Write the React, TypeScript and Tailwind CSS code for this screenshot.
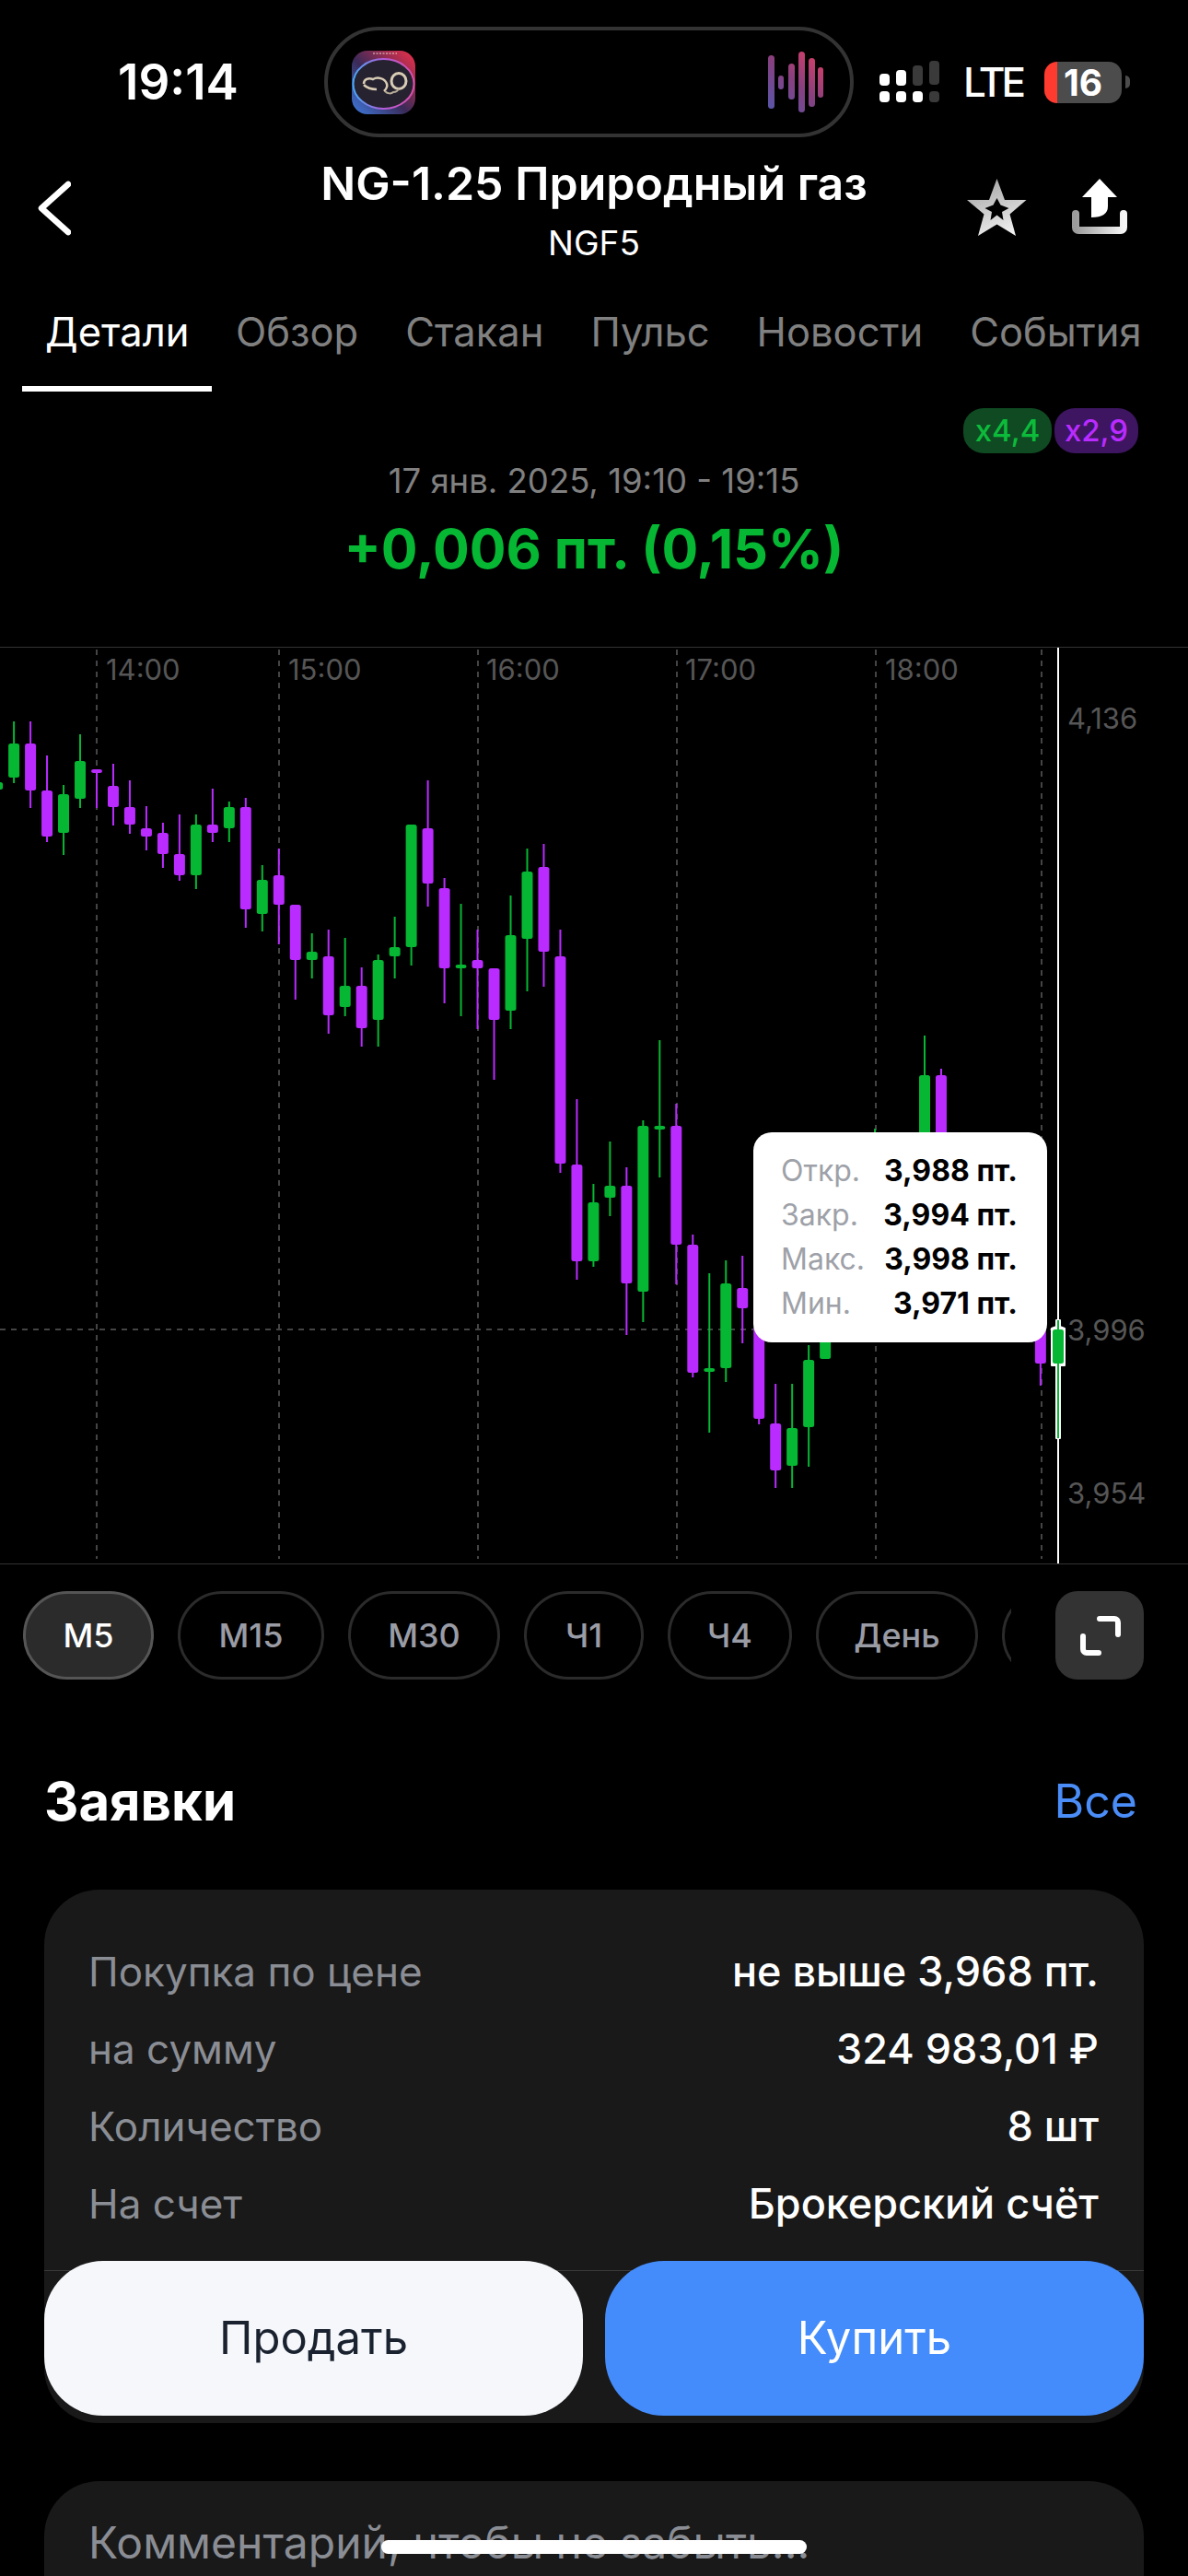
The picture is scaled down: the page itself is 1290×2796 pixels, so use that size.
// x offset of candle 0 and the step between candles
const X0 = 105
const STEP = 17.98
const GREEN = "#06b733"
const PURPLE = "#b92bff"

// [index, up?, wickTop, bodyTop, bodyBottom, wickBottom]
const candles: [number, boolean, number, number, number, number][] = [
  [-6, true, 849, 849, 857, 857],
  [-5, true, 783, 807, 844, 850],
  [-4, false, 783, 807, 858, 877],
  [-3, false, 820, 858, 908, 914],
  [-2, true, 852, 862, 904, 928],
  [-1, true, 797, 826, 867, 877],
  [0, false, 835, 835, 839, 877],
  [1, false, 829, 853, 876, 896],
  [2, false, 847, 876, 895, 905],
  [3, false, 875, 899, 908, 923],
  [4, false, 893, 904, 927, 942],
  [5, false, 884, 927, 950, 956],
  [6, true, 884, 895, 950, 965],
  [7, false, 856, 895, 904, 914],
  [8, true, 870, 876, 899, 914],
  [9, false, 866, 876, 987, 1007],
  [10, true, 939, 955, 992, 1011],
  [11, false, 921, 950, 982, 1025],
  [12, false, 982, 982, 1042, 1085],
  [13, true, 1013, 1033, 1042, 1062],
  [14, false, 1009, 1038, 1102, 1122],
  [15, true, 1018, 1070, 1093, 1103],
  [16, false, 1050, 1070, 1116, 1136],
  [17, true, 1036, 1042, 1107, 1136],
  [18, true, 995, 1028, 1038, 1062],
  [19, true, 895, 895, 1028, 1048],
  [20, false, 847, 899, 959, 984],
  [21, false, 953, 964, 1051, 1089],
  [22, true, 981, 1047, 1051, 1103],
  [23, false, 1009, 1042, 1051, 1117],
  [24, false, 1051, 1051, 1107, 1172],
  [25, true, 972, 1015, 1097, 1117],
  [26, true, 921, 946, 1019, 1076],
  [27, false, 916, 941, 1033, 1071],
  [28, false, 1009, 1038, 1263, 1273],
  [29, false, 1193, 1264, 1369, 1389],
  [30, true, 1285, 1305, 1369, 1375],
  [31, true, 1239, 1287, 1300, 1320],
  [32, false, 1267, 1287, 1393, 1449],
  [33, true, 1216, 1222, 1402, 1435],
  [34, true, 1129, 1222, 1226, 1278],
  [35, false, 1198, 1222, 1351, 1394],
  [36, false, 1340, 1351, 1490, 1495],
  [37, true, 1382, 1485, 1489, 1555],
  [38, true, 1368, 1393, 1485, 1500],
  [39, false, 1363, 1398, 1420, 1458],
  [40, false, 1370, 1440, 1540, 1546],
  [41, false, 1502, 1545, 1596, 1615],
  [42, true, 1502, 1550, 1591, 1615],
  [43, true, 1460, 1476, 1549, 1592],
  [44, true, 1375, 1400, 1475, 1475],
  [47, true, 1225, 1240, 1300, 1330],
  [50, true, 1124, 1167, 1290, 1330],
  [51, false, 1160, 1167, 1300, 1340],
  [57, false, 1380, 1400, 1480, 1504],
]

const gridX = [105, 303, 519, 735, 951, 1131]
const timeLabels = [
  { text: "14:00", className: "left-[115px]" },
  { text: "15:00", className: "left-[313px]" },
  { text: "16:00", className: "left-[528px]" },
  { text: "17:00", className: "left-[744px]" },
  { text: "18:00", className: "left-[961px]" },
]
const tabs = ["Детали", "Обзор", "Стакан", "Пульс", "Новости", "События"]
const periods = [
  { text: "М5", className: "w-[142px]" },
  { text: "М15", className: "w-[159px]" },
  { text: "М30", className: "w-[165px]" },
  { text: "Ч1", className: "w-[130px]" },
  { text: "Ч4", className: "w-[135px]" },
  { text: "День", className: "w-[176px]" },
  { text: "", className: "w-[120px]" },
]
const ohlc = [
  ["Откр.", "3,988 пт."],
  ["Закр.", "3,994 пт."],
  ["Макс.", "3,998 пт."],
  ["Мин.", "3,971 пт."],
]
const orderRows = [
  ["Покупка по цене", "не выше 3,968 пт."],
  ["на сумму", "324 983,01 ₽"],
  ["Количество", "8 шт"],
  ["На счет", "Брокерский счёт"],
]

const AppIcon = () => (
  <svg width="69" height="69" viewBox="0 0 69 69" className="shrink-0">
    <defs>
      <linearGradient id="iconBg" x1="0" y1="1" x2="1" y2="0">
        <stop offset="0" stopColor="#3f7be0" />
        <stop offset="0.45" stopColor="#3a2a58" />
        <stop offset="1" stopColor="#f0304a" />
      </linearGradient>
      <linearGradient id="iconRing" x1="0" y1="0.5" x2="1" y2="0.5">
        <stop offset="0" stopColor="#45a8f5" />
        <stop offset="0.5" stopColor="#b45cd8" />
        <stop offset="1" stopColor="#d84fa8" />
      </linearGradient>
    </defs>
    <rect width="69" height="69" rx="17" fill="url(#iconBg)" />
    <ellipse cx="34.5" cy="36" rx="33" ry="27" fill="#262230" stroke="url(#iconRing)" strokeWidth="2" />
    <path d="M13 36c0-5 5-7 10-5 5-3 13-1 15 5 1 3-1 6-3 8" fill="none" stroke="#d9ccb4" strokeWidth="2.5" />
    <path d="M13 37c3 3 9 5 14 5" fill="none" stroke="#d9ccb4" strokeWidth="2.5" />
    <ellipse cx="51" cy="33" rx="8" ry="8.5" fill="none" stroke="#d9ccb4" strokeWidth="3" />
    <path d="M36 44c3 3 7 3 9 1 3 0 5-1 6-4" fill="none" stroke="#b8ac98" strokeWidth="2" />
    <path d="M23 3h26" stroke="#e8dcd0" strokeWidth="1" strokeDasharray="2 1.5" />
  </svg>
)

const Waveform = () => (
  <svg width="60" height="66" viewBox="0 0 60 66" className="shrink-0">
    <defs>
      <linearGradient id="wave" gradientUnits="userSpaceOnUse" x1="0" y1="66" x2="60" y2="0">
        <stop offset="0" stopColor="#5557ad" />
        <stop offset="0.5" stopColor="#87407f" />
        <stop offset="1" stopColor="#e33f63" />
      </linearGradient>
    </defs>
    <rect x="0" y="4" width="7" height="58" rx="3.5" fill="url(#wave)" />
    <rect x="11" y="26" width="6" height="15" rx="3" fill="url(#wave)" />
    <rect x="22" y="13" width="7" height="39" rx="3.5" fill="url(#wave)" />
    <rect x="33" y="0" width="7" height="66" rx="3.5" fill="url(#wave)" />
    <rect x="44" y="7" width="7" height="53" rx="3.5" fill="url(#wave)" />
    <rect x="54" y="17" width="6" height="33" rx="3" fill="url(#wave)" />
  </svg>
)

const SignalDots = () => (
  <svg width="66" height="46" viewBox="0 0 66 46" className="shrink-0">
    <rect x="0" y="14" width="11" height="13" rx="4" fill="#fff" />
    <rect x="18" y="10" width="11" height="17" rx="4" fill="#fff" />
    <rect x="36" y="5" width="11" height="22" rx="4" fill="#3a3a3a" />
    <rect x="54" y="0" width="11" height="26" rx="4" fill="#3a3a3a" />
    <rect x="0" y="33" width="11" height="12" rx="4" fill="#fff" />
    <rect x="18" y="33" width="11" height="12" rx="4" fill="#fff" />
    <rect x="36" y="33" width="11" height="12" rx="4" fill="#fff" />
    <rect x="54" y="33" width="11" height="12" rx="4" fill="#3a3a3a" />
  </svg>
)

const BackIcon = () => (
  <svg width="36" height="60" viewBox="0 0 36 60" fill="none" stroke="#fff" strokeWidth="6.5" strokeLinecap="round" strokeLinejoin="round">
    <path d="M33 4L4 30L33 56" />
  </svg>
)

const StarIcon = () => (
  <svg width="65" height="63" viewBox="0 0 65 63" className="shrink-0">
    <defs>
      <linearGradient id="star" x1="0.3" y1="0" x2="0.7" y2="1">
        <stop offset="0" stopColor="#a6a6a6" />
        <stop offset="1" stopColor="#f2f2f2" />
      </linearGradient>
    </defs>
    <path
      fillRule="evenodd"
      fill="url(#star)"
      d="M32.5 0L41 23H64.5L46.5 38.5L53 62L32.5 49.5L12 62L18.5 38.5L0 23H24ZM32.5 21L28.5 28.5L19.5 32L27 36L25.5 45L32.5 39.5L39.5 45L38 36L45.5 32L36.5 28.5Z"
    />
  </svg>
)

const ShareIcon = () => (
  <svg width="60" height="60" viewBox="0 0 60 60" className="ml-[49px] shrink-0">
    <defs>
      <linearGradient id="tray" x1="0" y1="0" x2="1" y2="0">
        <stop offset="0" stopColor="#9c9c9c" />
        <stop offset="1" stopColor="#f5f5f5" />
      </linearGradient>
    </defs>
    <path d="M30 0L49 20H39V30Q39 42 21 42V20H11Z" fill="#fff" />
    <path d="M4 38V53a3 3 0 0 0 3 3H53a3 3 0 0 0 3-3V38" fill="none" stroke="url(#tray)" strokeWidth="8" strokeLinecap="round" />
  </svg>
)

const Candle = ({ c }: { c: (typeof candles)[number] }) => {
  const [i, up, wickTop, bodyTop, bodyBottom, wickBottom] = c
  const x = X0 + i * STEP
  const color = up ? GREEN : PURPLE
  return (
    <g>
      <rect x={x - 1} y={wickTop} width="2" height={wickBottom - wickTop} fill={color} />
      <rect x={x - 6} y={bodyTop} width="12" height={Math.max(bodyBottom - bodyTop, 4)} rx="2.5" fill={color} />
    </g>
  )
}

const Chart = () => (
  <div className="relative h-[996px] overflow-hidden border-y border-[#333]">
    <svg viewBox="0 702 1290 996" width="1290" height="996" className="absolute left-0 top-[-1px]">
      {gridX.map((x) => (
        <line key={x} x1={x} x2={x} y1="705" y2="1692" stroke="#444" strokeWidth="2" strokeDasharray="6 6" />
      ))}
      <line x1="0" x2="1149" y1="1443" y2="1443" stroke="#444" strokeWidth="2" strokeDasharray="6 6" />
      {candles.map((c) => (
        <Candle key={c[0]} c={c} />
      ))}
      <rect x="1148" y="702" width="2" height="996" fill="#fff" />
      {/* selected candle */}
      <path d="M1147 1433h4v7l5 2v40h-5v79h-4v-79h-5v-40l5-2z" fill="#fff" stroke="#fff" strokeWidth="2" strokeLinejoin="round" />
      <rect x="1148" y="1433" width="2" height="128" fill={GREEN} />
      <rect x="1143" y="1443" width="12" height="37" rx="2.5" fill={GREEN} />
    </svg>

    {timeLabels.map((t) => (
      <span key={t.text} className={`absolute top-[6px] text-[31px] leading-[36px] text-[#565656] ${t.className}`}>
        {t.text}
      </span>
    ))}
    <span className="absolute left-[1159px] top-[59px] text-[31px] leading-[36px] text-[#565656]">4,136</span>
    <span className="absolute left-[1159px] top-[723px] text-[31px] leading-[36px] text-[#565656]">3,996</span>
    <span className="absolute left-[1159px] top-[900px] text-[31px] leading-[36px] text-[#565656]">3,954</span>

    <div className="absolute left-[818px] top-[526px] flex h-[228px] w-[319px] flex-col justify-center rounded-[20px] bg-white pl-[30px] pr-[32px]">
      {ohlc.map(([label, value]) => (
        <div key={label} className="flex h-[48px] items-center justify-between text-[32px]">
          <span className="text-[#9ea1a8]">{label}</span>
          <span className="font-bold text-black">{value}</span>
        </div>
      ))}
    </div>
  </div>
)

export default function App() {
  return (
    <div className="relative h-[2796px] w-[1290px] overflow-hidden bg-black font-[Inter,sans-serif] text-white">
      {/* status bar */}
      <div className="flex h-[178px] items-center pl-[128px]">
        <span className="w-[224px] text-[53px] font-semibold leading-none">19:14</span>
        <div className="flex h-[120px] w-[575px] items-center justify-between rounded-full border-4 border-[#333] bg-black pl-[26px] pr-[29px]">
          <AppIcon />
          <Waveform />
        </div>
        <div className="ml-[28px]">
          <SignalDots />
        </div>
        <span className="ml-[25px] w-[63px] text-[44px] font-medium leading-none tracking-[-4px]">LTE</span>
        <div className="ml-[25px] flex h-[45px] w-[84px] items-center justify-center overflow-hidden rounded-[14px] bg-[#4c4c4c] text-[39px] font-bold leading-none [background-image:linear-gradient(90deg,#ff3b30_14px,transparent_14px)]">
          16
        </div>
        <div className="ml-[4px] h-[14px] w-[5px] rounded-r-full bg-[#4c4c4c]" />
      </div>

      {/* header */}
      <div className="-mt-[8px] flex">
        <div className="w-[240px] pl-[41px] pt-[26px]">
          <BackIcon />
        </div>
        <div className="flex-1 text-center">
          <div className="text-[50px] font-semibold leading-[58px]">NG-1.25 Природный газ</div>
          <div className="mt-[13px] text-[37px] leading-[46px]">NGF5</div>
        </div>
        <div className="flex w-[240px] items-start pt-[24px]">
          <StarIcon />
          <ShareIcon />
        </div>
      </div>

      {/* tabs */}
      <div className="flex pl-[24px]">
        {tabs.map((tab, i) => (
          <div
            key={tab}
            className={
              i === 0
                ? "shrink-0 border-b-[6px] border-white px-[25px] pb-[34px] pt-[48px] text-[43.5px] leading-[50px]"
                : "shrink-0 border-b-[6px] border-transparent px-[25.5px] pb-[34px] pt-[48px] text-[43.5px] leading-[50px] text-[#808080]"
            }
          >
            {tab}
          </div>
        ))}
      </div>

      {/* volume badges + period change */}
      <div className="flex justify-end gap-[3px] pr-[54px] pt-[18px]">
        <div className="flex h-[49px] w-[96px] items-center justify-center rounded-[22px] bg-[#0f4a22] text-[33px] font-medium text-[#0dbb3b]">
          x4,4
        </div>
        <div className="flex h-[49px] w-[91px] items-center justify-center rounded-[22px] bg-[#3d1560] text-[33px] font-medium text-[#b92bff]">
          x2,9
        </div>
      </div>
      <div className="mt-[8px] text-center text-[36.5px] leading-[44px] text-[#808080]">17 янв. 2025, 19:10 - 19:15</div>
      <div className="mt-[16px] text-center text-[59px] font-bold leading-[72px] text-[#06b733]">+0,006 пт. (0,15%)</div>

      <div className="mt-[70px]">
        <Chart />
      </div>

      {/* timeframe selector */}
      <div className="mt-[29px] flex h-[96px] pl-[25px] pr-[48px]">
        <div className="flex w-[1073px] gap-[26px] overflow-hidden">
          {periods.map((p, i) => (
            <div
              key={p.className}
              className={`flex shrink-0 items-center justify-center rounded-full border-[3px] text-[36px] font-medium ${p.className} ${
                i === 0 ? "border-[#555] bg-[#2b2b2b] text-white" : "border-[#2b2b2b] text-[#9a9ca5]"
              }`}
            >
              {p.text}
            </div>
          ))}
        </div>
        <div className="ml-auto flex h-[96px] w-[96px] items-center justify-center rounded-[24px] bg-[#333]">
          <svg width="48" height="48" viewBox="0 0 48 48" fill="none" stroke="#fff" strokeWidth="6" strokeLinecap="round" strokeLinejoin="round">
            <path d="M24 6H40a4 4 0 0 1 4 4V23" />
            <path d="M6 25V39a4 4 0 0 0 4 4H23" />
          </svg>
        </div>
      </div>

      {/* orders */}
      <div className="mt-[96px] flex items-center justify-between pl-[48px] pr-[55px] leading-[72px]">
        <span className="text-[58px] font-bold">Заявки</span>
        <span className="text-[50px] text-[#4a8df8]">Все</span>
      </div>

      <div className="mx-[48px] mt-[60px] rounded-[60px] bg-[#191919] pb-[8px] pt-[47px]">
        <div className="pl-[48px] pr-[49px]">
          {orderRows.map(([label, value]) => (
            <div key={label} className="flex h-[84px] items-center justify-between">
              <span className="text-[44px] text-[#8a8d94]">{label}</span>
              <span className="text-[45px] font-medium">{value}</span>
            </div>
          ))}
        </div>
        <div className="mt-[30px] h-px bg-[#3a3a3a]" />
        <div className="-mt-[11px] flex gap-[24px]">
          <button className="flex h-[168px] flex-1 items-center justify-center rounded-[64px] bg-[#f5f7fa] text-[49px] text-[#1a2230]">
            Продать
          </button>
          <button className="flex h-[168px] flex-1 items-center justify-center rounded-[64px] bg-[#448cfb] text-[49px] text-white">
            Купить
          </button>
        </div>
      </div>

      <div className="mx-[48px] mt-[63px] h-[200px] rounded-[60px] bg-[#191919] pl-[48px] pt-[44px] text-[48px] leading-[46px] text-[#8a8d94]">
        Комментарий, чтобы не забыть...
      </div>

      {/* home indicator */}
      <div className="absolute bottom-[24px] left-[414px] h-[15px] w-[462px] rounded-full bg-white" />
    </div>
  )
}
